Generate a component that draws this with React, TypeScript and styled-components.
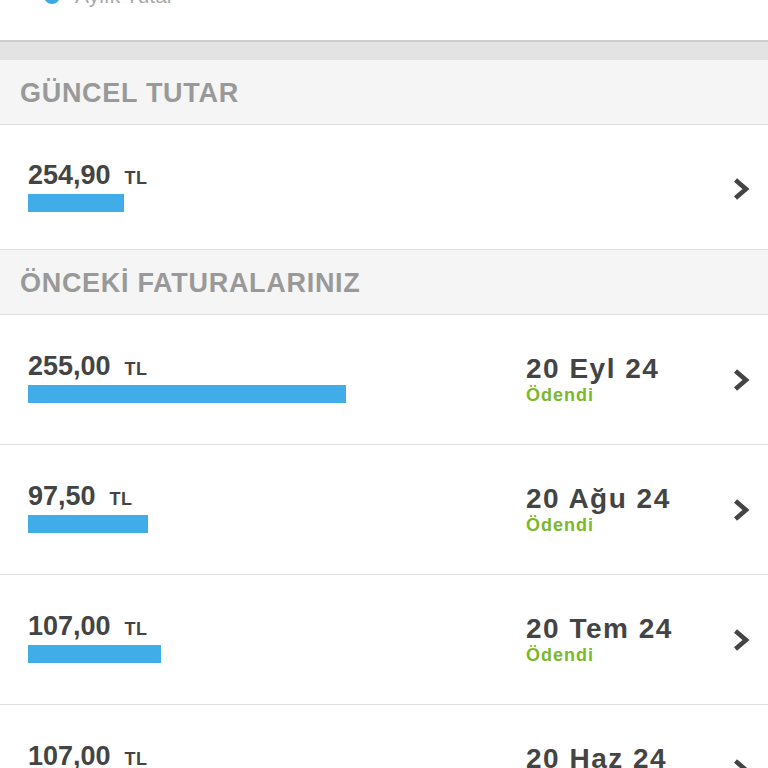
import React from "react";
import styled, { createGlobalStyle } from "styled-components";

const GlobalStyle = createGlobalStyle`
  html, body {
    margin: 0;
    padding: 0;
    background: #ffffff;
  }
  body {
    font-family: "Liberation Sans", Arial, Helvetica, sans-serif;
    overflow: hidden;
  }
`;

type Bill = {
  amount: string;
  barWidth: number;
  date?: string;
  status?: string;
};

const current: Bill = { amount: "254,90", barWidth: 96 };

const previous: Bill[] = [
  { amount: "255,00", barWidth: 318, date: "20 Eyl 24", status: "Ödendi" },
  { amount: "97,50", barWidth: 120, date: "20 Ağu 24", status: "Ödendi" },
  { amount: "107,00", barWidth: 133, date: "20 Tem 24", status: "Ödendi" },
  { amount: "107,00", barWidth: 133, date: "20 Haz 24", status: "Ödendi" },
];

const Chevron: React.FC = () => (
  <svg width="18" height="24" viewBox="0 0 18 24">
    <polyline
      points="3.5,3 14,12 3.5,21"
      fill="none"
      stroke="#444444"
      strokeWidth="4.6"
      strokeLinejoin="miter"
      strokeLinecap="butt"
    />
  </svg>
);

const BillRow: React.FC<{ bill: Bill; height: number; $shift?: number }> = ({ bill, height, $shift = 0 }) => (
  <Row $height={height} $shift={$shift}>
    <AmountBlock>
      <AmountLine>
        <Amount>{bill.amount}</Amount>
        <Currency>TL</Currency>
      </AmountLine>
      <Bar style={{ width: bill.barWidth }} />
    </AmountBlock>
    <DateBlock>
      {bill.date && <DateText>{bill.date}</DateText>}
      {bill.status && <Status>{bill.status}</Status>}
    </DateBlock>
    <ChevronCell>
      <Chevron />
    </ChevronCell>
  </Row>
);

const App: React.FC = () => {
  return (
    <Wrapper>
      <GlobalStyle />
      {/* grafik lejantı (üstte kesik) */}
      <Top>
        <Legend>
          <Dot />
          <LegendText>Aylık Tutar</LegendText>
        </Legend>
      </Top>
      <Band />

      <SectionHeader>GÜNCEL TUTAR</SectionHeader>
      <BillRow bill={current} height={125} $shift={4} />

      <SectionHeader>ÖNCEKİ FATURALARINIZ</SectionHeader>
      {previous.map((b, i) => (
        <BillRow key={i} bill={b} height={130} />
      ))}
    </Wrapper>
  );
};

const Wrapper = styled.div`
  display: flex;
  flex-direction: column;
  width: 768px;
`;

const Top = styled.div`
  display: flex;
  flex-direction: column;
  height: 40px;
  overflow: hidden;
  background: #ffffff;
`;

const Legend = styled.div`
  display: flex;
  align-items: center;
  gap: 15px;
  height: 24px;
  margin-top: -16px;
  padding-left: 44px;
`;

const Dot = styled.div`
  width: 16px;
  height: 16px;
  border-radius: 50%;
  background: #3aa9e6;
`;

const LegendText = styled.span`
  font-size: 21px;
  line-height: 24px;
  color: #aaaaaa;
`;

const Band = styled.div`
  height: 20px;
  box-sizing: border-box;
  background: #e3e3e3;
  border-top: 2px solid #cdcdcd;
`;

const SectionHeader = styled.div`
  display: flex;
  align-items: center;
  height: 65px;
  box-sizing: border-box;
  padding: 3px 0 0 20px;
  background: #f5f5f5;
  border-bottom: 1px solid #dedede;
  font-size: 27px;
  font-weight: 700;
  letter-spacing: 0.7px;
  color: #999999;
`;

const Row = styled.div<{ $height: number; $shift: number }>`
  display: grid;
  grid-template-columns: 1fr 206px 18px;
  align-items: center;
  height: ${(p) => p.$height}px;
  box-sizing: border-box;
  padding: ${(p) => p.$shift}px 18px 0 28px;
  background: #ffffff;
  border-bottom: 1px solid #e2e2e2;
`;

const AmountBlock = styled.div`
  display: flex;
  flex-direction: column;
  margin-bottom: 4px;
`;

const AmountLine = styled.div`
  display: flex;
  align-items: baseline;
  gap: 14px;
  line-height: 1;
`;

const Amount = styled.span`
  font-size: 27px;
  font-weight: 700;
  color: #444444;
`;

const Currency = styled.span`
  font-size: 18px;
  font-weight: 700;
  letter-spacing: 0.5px;
  color: #444444;
`;

const Bar = styled.div`
  height: 18px;
  margin-top: 5px;
  background: #40ade8;
`;

const DateBlock = styled.div`
  display: flex;
  flex-direction: column;
`;

const DateText = styled.span`
  font-size: 28px;
  line-height: 1;
  font-weight: 700;
  letter-spacing: 1.5px;
  color: #444444;
`;

const Status = styled.span`
  margin-top: 3px;
  font-size: 18px;
  line-height: 1;
  font-weight: 700;
  letter-spacing: 1px;
  color: #7ab82c;
`;

const ChevronCell = styled.div`
  display: flex;
  align-items: center;
  justify-content: center;
`;

export default App;
